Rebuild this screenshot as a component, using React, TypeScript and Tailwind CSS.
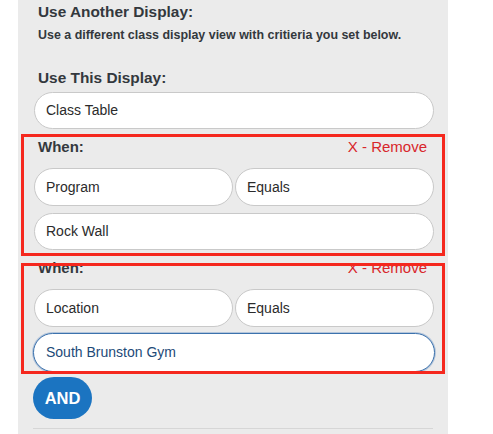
import React from "react";

const font = { fontFamily: '"Liberation Sans", Arial, Helvetica, sans-serif' };

function Field({ text, className = "" }: { text: string; className?: string }) {
  return (
    <div
      className={`flex items-center rounded-full border border-[#c9c9c9] bg-white pl-[11px] text-[14px] text-[#2b2b2b] ${className}`}
    >
      {text}
    </div>
  );
}

function WhenBlock({ field, value, focused }: { field: string; value: string; focused?: boolean }) {
  return (
    <div className="flex flex-col">
      <div className="mt-[9px] flex h-[18px] items-center justify-between pl-[4px] pr-[7px] text-[15px] leading-[18px]">
        <span className="font-bold text-[#34393e]">When:</span>
        <span className="text-[#d8262a]">X - Remove</span>
      </div>
      <div className="mt-[12px] grid grid-cols-2 gap-[2px]">
        <Field text={field} className="h-[38px]" />
        <Field text="Equals" className="h-[38px]" />
      </div>
      {focused ? (
        <div className="mt-[6px] -mx-[1px] flex h-[39px] items-center rounded-full border border-[#3c72ad] bg-white pl-[12px] text-[14px] text-[#1d4a78] shadow-[0_0_0_1px_rgba(80,130,190,0.35)]">
          {value}
        </div>
      ) : (
        <Field text={value} className="mt-[7px] h-[37px]" />
      )}
    </div>
  );
}

export default function App() {
  return (
    <div className="relative h-[434px] w-[493px] overflow-hidden bg-white" style={font}>
      <div className="ml-[18px] h-[434px] w-[430px] bg-[#ebebeb] pl-[16px] pr-[14px]">
        <div className="flex flex-col pt-[3px]">
          <div className="pl-[4px] text-[15.4px] font-bold leading-[18px] text-[#33383d]">Use Another Display:</div>
          <div className="mt-[7px] pl-[4px] text-[12.45px] font-bold leading-[15px] text-[#33383d]">
            Use a different class display view with critieria you set below.
          </div>
          <div className="mt-[26px] pl-[4px] text-[15.4px] font-bold leading-[18px] text-[#33383d]">Use This Display:</div>
          <Field text="Class Table" className="mt-[5px] h-[37px]" />
          <WhenBlock field="Program" value="Rock Wall" />
          <WhenBlock field="Location" value="South Brunston Gym" focused />
          <div className="mt-[5px] flex">
            <button className="-ml-[1px] flex h-[42px] w-[59px] items-center justify-center rounded-full bg-[#1b74c1] text-[16.5px] font-bold text-white">
              AND
            </button>
          </div>
          <div className="mt-[9px] -ml-[1px] h-px w-[400px] bg-[#d6d6d6]" />
        </div>
      </div>
      <div className="pointer-events-none absolute left-[21px] top-[134px] h-[122px] w-[424px] border-[3px] border-[#f5281e]" />
      <div className="pointer-events-none absolute left-[21px] top-[263px] h-[111px] w-[424px] border-[3px] border-[#f5281e]" />
    </div>
  );
}
